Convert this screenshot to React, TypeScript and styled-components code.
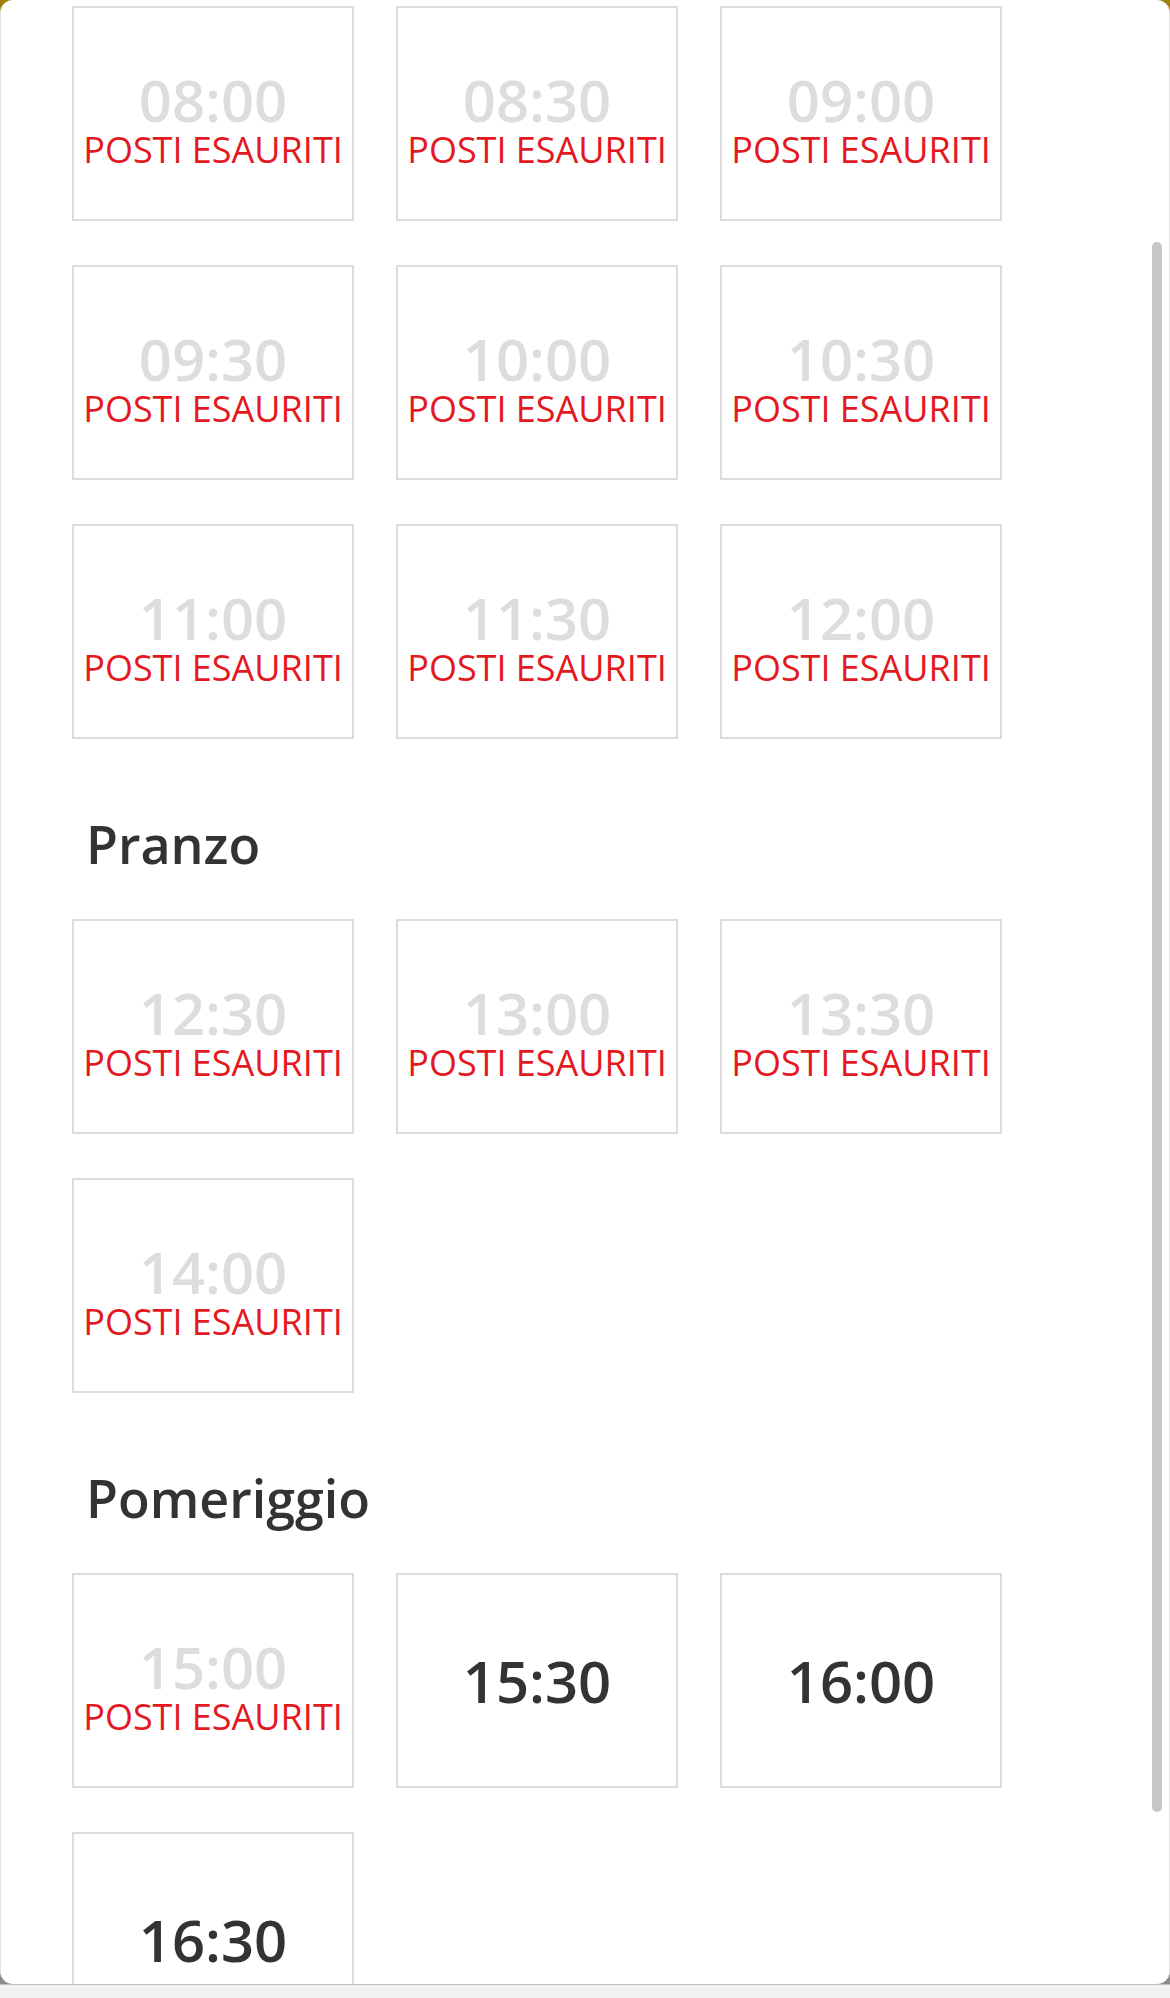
import styled, { createGlobalStyle } from "styled-components";

const GlobalStyle = createGlobalStyle`
  * {
    box-sizing: border-box;
  }
  body {
    margin: 0;
    font-family: "Open Sans", "Liberation Sans", sans-serif;
    background: #ffffff;
  }
`;

const Screen = styled.div`
  width: 1170px;
  height: 1998px;
  display: flex;
  flex-direction: column;
  background: linear-gradient(to bottom, #a07f0c 0, #a07f0c 50%, #8c8c8c 50%);
  overflow: hidden;
`;

const Panel = styled.div`
  position: relative;
  height: 1984px;
  flex-shrink: 0;
  background: #ffffff;
  border-left: 1px solid #e2e2e2;
  border-right: 1px solid #e2e2e2;
  border-radius: 13px;
  overflow: hidden;
`;

const Content = styled.div`
  padding: 6px 0 0 71px;
  display: flex;
  flex-direction: column;
`;

const Section = styled.section`
  display: flex;
  flex-direction: column;
  & + & {
    margin-top: 68px;
  }
`;

const SectionTitle = styled.h3`
  margin: 0 0 39px 14px;
  font-size: 52px;
  line-height: 73px;
  font-weight: 600;
  color: #333333;
`;

const SlotGrid = styled.div`
  display: grid;
  grid-template-columns: repeat(3, 282px);
  column-gap: 42px;
  row-gap: 44px;
`;

const Slot = styled.div<{ $full?: boolean }>`
  height: 215px;
  border: 2px solid #dcdcdc;
  background: #ffffff;
  display: flex;
  flex-direction: column;
  align-items: center;
  justify-content: center;
  padding-top: ${(p) => (p.$full ? "14px" : "0")};
`;

const Time = styled.div<{ $full?: boolean }>`
  font-size: 58px;
  line-height: 58px;
  font-weight: 600;
  color: ${(p) => (p.$full ? "#dddddd" : "#333333")};
`;

const SoldOut = styled.div`
  font-size: 36px;
  line-height: 42px;
  font-weight: 400;
  color: #e3191f;
  white-space: nowrap;
`;

const Scrollbar = styled.div`
  position: absolute;
  top: 242px;
  right: 7px;
  width: 10px;
  height: 1570px;
  border-radius: 5px;
  background: #c6c6c6;
`;

const BottomBar = styled.div`
  flex: 1;
  background: #f1f1f1;
  border-top: 1px solid #bdbdbd;
`;

type SlotData = { time: string; full: boolean };

const sections: { title?: string; slots: SlotData[] }[] = [
  {
    slots: [
      { time: "08:00", full: true },
      { time: "08:30", full: true },
      { time: "09:00", full: true },
      { time: "09:30", full: true },
      { time: "10:00", full: true },
      { time: "10:30", full: true },
      { time: "11:00", full: true },
      { time: "11:30", full: true },
      { time: "12:00", full: true },
    ],
  },
  {
    title: "Pranzo",
    slots: [
      { time: "12:30", full: true },
      { time: "13:00", full: true },
      { time: "13:30", full: true },
      { time: "14:00", full: true },
    ],
  },
  {
    title: "Pomeriggio",
    slots: [
      { time: "15:00", full: true },
      { time: "15:30", full: false },
      { time: "16:00", full: false },
      { time: "16:30", full: false },
    ],
  },
];

const App = () => {
  return (
    <>
      <GlobalStyle />
      <Screen>
        <Panel>
          <Content>
            {sections.map((section, i) => (
              <Section key={i}>
                {section.title && <SectionTitle>{section.title}</SectionTitle>}
                <SlotGrid>
                  {section.slots.map((slot) => (
                    <Slot key={slot.time} $full={slot.full}>
                      <Time $full={slot.full}>{slot.time}</Time>
                      {slot.full && <SoldOut>POSTI ESAURITI</SoldOut>}
                    </Slot>
                  ))}
                </SlotGrid>
              </Section>
            ))}
          </Content>
          <Scrollbar />
        </Panel>
        <BottomBar />
      </Screen>
    </>
  );
};

export default App;
